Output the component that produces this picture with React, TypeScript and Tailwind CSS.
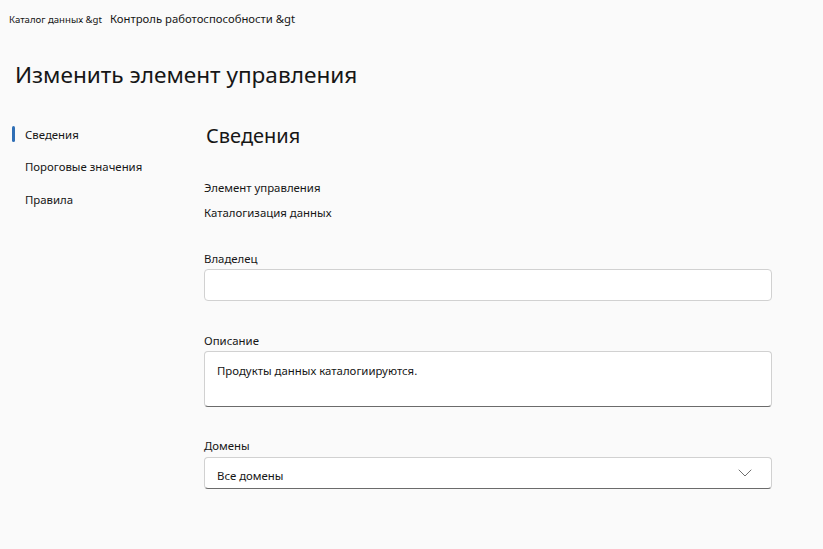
import { ChevronDown } from "lucide-react";

const navItems = ["Сведения", "Пороговые значения", "Правила"];

export default function App() {
  return (
    <div className="min-h-[549px] w-full bg-[#fafafa] text-[#161616] font-['Noto_Sans',sans-serif]">
      <div className="flex items-baseline pl-[9px] pt-[11px] h-[32px]">
        <span className="text-[9.6px]">Каталог данных &amp;gt</span>
        <span className="ml-[8px] text-[11.3px]">Контроль работоспособности &amp;gt</span>
      </div>

      <h1 className="pl-[15px] mt-[26px] text-[22.6px] leading-[34px]">Изменить элемент управления</h1>

      <div className="flex mt-[19px]">
        <nav className="w-[204px] flex flex-col pt-[7px]">
          {navItems.map((item, i) => (
            <div key={item} className="flex items-center h-[32.5px]">
              <div className={`ml-[12px] w-[3px] h-[16px] rounded-sm ${i === 0 ? "bg-[#2f6fb6]" : ""}`} />
              <span className="ml-[10px] text-[11.4px]">{item}</span>
            </div>
          ))}
        </nav>

        <main className="w-[568px] text-[11.4px]">
          <h2 className="pl-[2px] text-[20px] leading-[28px] pt-[11px]">Сведения</h2>

          <div className="mt-[30px] leading-[16px]">Элемент управления</div>
          <div className="mt-[9px] leading-[16px]">Каталогизация данных</div>

          <label className="block mt-[30px] leading-[16px]">Владелец</label>
          <div className="mt-[2px] h-[32px] bg-white border border-[#d1d1d1] rounded" />

          <label className="block mt-[32px] leading-[16px]">Описание</label>
          <div className="mt-[2px] h-[56px] bg-white border border-[#d1d1d1] border-b-[#6b6b6b] rounded px-[12px] pt-[10px]">
            Продукты данных каталогиируются.
          </div>

          <label className="block mt-[31px] leading-[16px]">Домены</label>
          <div className="mt-[3px] h-[32px] bg-white border border-[#d1d1d1] border-b-[#6b6b6b] rounded flex items-center justify-between pl-[12px] pr-[14px]">
            <span className="pt-[6px]">Все домены</span>
            <ChevronDown className="w-[24px] h-[24px] text-[#707070]" strokeWidth={1} />
          </div>
        </main>
      </div>
    </div>
  );
}
